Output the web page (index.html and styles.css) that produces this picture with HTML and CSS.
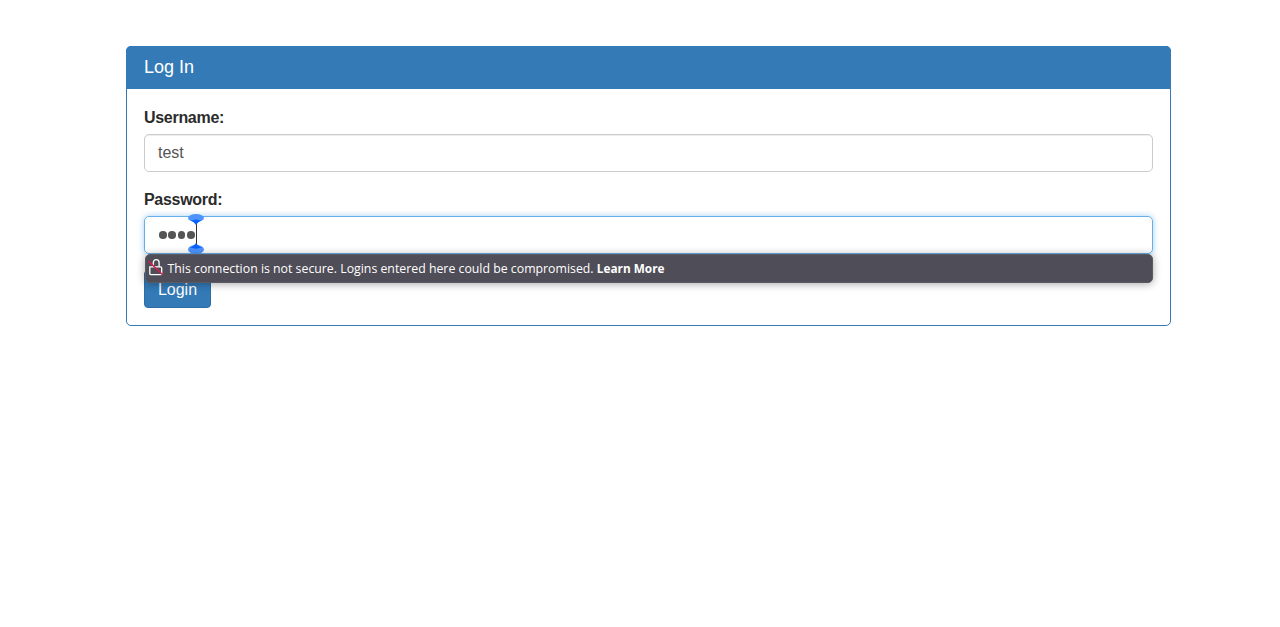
FILE: index.html
```html
<!DOCTYPE html>
<html lang="en">
<head>
<meta charset="utf-8">
<title>Log In</title>
<link rel="stylesheet" href="styles.css">
</head>
<body>
<main class="panel">
  <h1 class="panel-heading">Log In</h1>
  <form class="panel-body">
    <div class="field">
      <label class="label" for="u">Username:</label>
      <div class="input"><span class="value">test</span></div>
    </div>
    <div class="field">
      <label class="label" for="p">Password:</label>
      <div class="input focused" id="p">
        <span class="dots"><i></i><i></i><i></i><i></i></span>
        <span class="caret">
          <svg class="handle handle-top" width="16" height="11" viewBox="0 0 16 11"><ellipse cx="8" cy="4" rx="8" ry="4" fill="#4d94ff"/><path d="M2.500 6.300C5 6.300 7 5.800 8 5.200c1 .6 3 1.100 5.500 1.100-2.300 1.100-4 2.700-5.500 4.700-1.500-2-3.200-3.600-5.500-4.700Z" fill="#0a62ff"/></svg>
          <svg class="handle handle-bottom" width="16" height="11" viewBox="0 0 16 11"><ellipse cx="8" cy="6.500" rx="8" ry="4.500" fill="#4d94ff"/><path d="M2 5C5 5 7 5.400 8 6c1-.6 3-1 6-1C11.400 3.800 9.500 2 8 0 6.500 2 4.600 3.800 2 5Z" fill="#0a62ff"/></svg>
        </span>
      </div>
      <div class="warning">
        <svg class="lock" width="16" height="18" viewBox="0 0 16 18" fill="none"><path d="M1.800 8.800h10.700a1.200 1.200 0 0 1 1.200 1.200v5.500a1.200 1.200 0 0 1-1.200 1.200H3a1.200 1.200 0 0 1-1.200-1.200Z" stroke="#fff" stroke-width="1.300"/><path d="M5.300 8.800V4.500a2.900 2.900 0 0 1 5.800 0v4.300" stroke="#fff" stroke-width="1.300"/><path d="M.3 3 14.300 16.500" stroke="#d81e4a" stroke-width="1.500"/></svg>
        <span class="warning-text">This connection is not secure. Logins entered here could be compromised. <b>Learn More</b></span>
      </div>
    </div>
    <button class="btn" type="button">Login</button>
  </form>
</main>
</body>
</html>
```
FILE: styles.css
```css
* { box-sizing: border-box; }
html, body { margin: 0; background: #fff; }
body {
  height: 627px;
  overflow: hidden;
  padding: 46px 109px 0 126px;
  font-family: "Liberation Sans", Arial, sans-serif;
  color: #333;
}
.panel {
  height: 280px;
  border: 1px solid #337ab7;
  border-radius: 5px;
  background: #fff;
}
.panel-heading {
  margin: -1px -1px 0;
  height: 43px;
  padding: 0 18px;
  background: #337ab7;
  border-radius: 5px 5px 0 0;
  color: #fff;
  font-size: 18px;
  font-weight: 400;
  line-height: 43px;
}
.panel-body {
  padding: 17px 17px 0;
  display: flex;
  flex-direction: column;
}
.field {
  position: relative;
  margin-bottom: 16px;
}
.label {
  display: block;
  height: 28px;
  padding-top: 1px;
  font-size: 16px;
  letter-spacing: -.3px;
  font-weight: 700;
  line-height: 22px;
  color: #2b2b2b;
}
.input {
  height: 38px;
  border: 1px solid #ccc;
  border-radius: 5px;
  padding: 0 13px;
  display: flex;
  align-items: center;
  font-size: 16px;
  color: #555;
  box-shadow: inset 0 1px 1px rgba(0,0,0,.075);
}
.input.focused {
  position: relative;
  padding-left: 14px;
  border-color: #66afe9;
  box-shadow: 0 0 6px rgba(102,175,233,.6);
}
.dots { display: flex; gap: 1.900px; }
.dots i {
  width: 7.500px;
  height: 7.500px;
  border-radius: 50%;
  background: #555;
}
.caret {
  position: relative;
  width: 1px;
  height: 28px;
  margin-left: 1.500px;
  background: #333;
}
.handle { position: absolute; left: -8px; }
.handle-top { top: -7px; }
.handle-bottom { bottom: -5px; }
.warning {
  position: absolute;
  left: .5px;
  right: 0;
  top: 66px;
  height: 29px;
  z-index: 2;
  display: flex;
  align-items: center;
  gap: 4px;
  padding-left: 2px;
  background: #4f4d57;
  border: 1px solid #5c5a64;
  border-radius: 5px;
  box-shadow: 0 1px 8px rgba(0,0,0,.35);
  color: #fff;
}
.lock { flex: none; margin-top: -3px; }
.warning-text {
  font-family: "Open Sans", sans-serif;
  font-size: 12.320px;
  white-space: nowrap;
}
.warning-text b { font-size: 11.800px; font-weight: 700; }
.btn {
  width: 67px;
  height: 38px;
  margin-top: 0;
  border: 1px solid #2e6da4;
  border-radius: 4px;
  background: #337ab7;
  color: #fff;
  font: 16px/1 "Liberation Sans", Arial, sans-serif;
  padding: 2px 0 0;
}
```
